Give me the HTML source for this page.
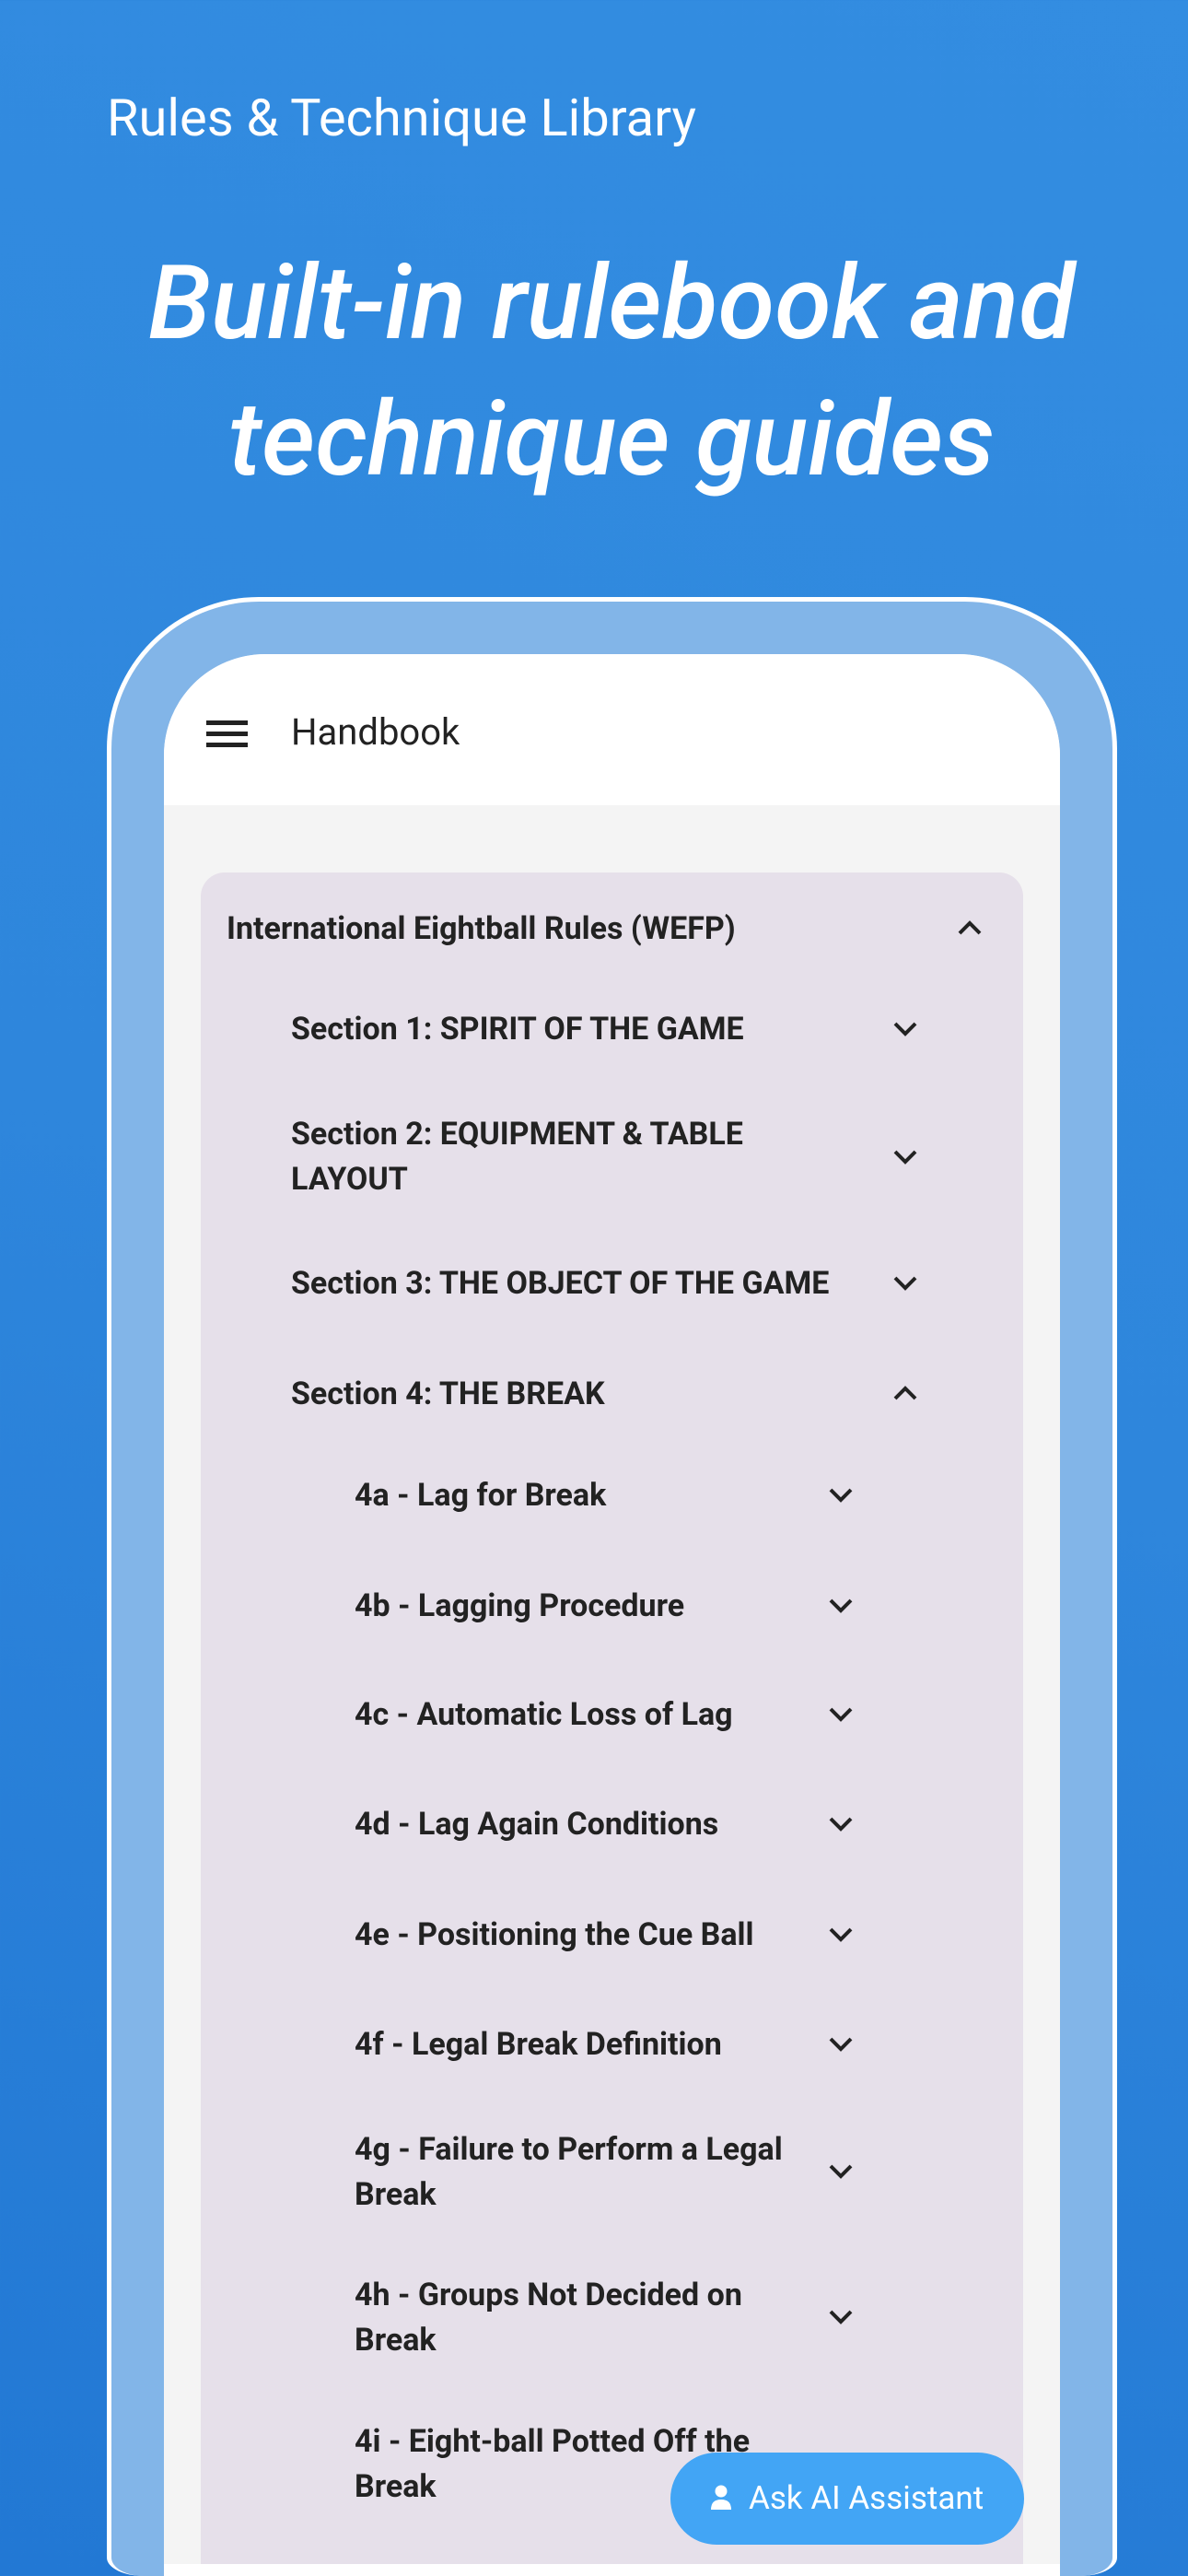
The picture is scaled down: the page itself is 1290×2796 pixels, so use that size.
<!DOCTYPE html>
<html style="width:1290px;height:2796px;overflow:hidden"><head><meta charset="utf-8"><style>
*{margin:0;padding:0;box-sizing:border-box}
body{width:1290px;height:2796px;overflow:hidden;position:relative;font-family:"Roboto","Liberation Sans",sans-serif;background:linear-gradient(200deg,#338de1 0%,#2e86dc 50%,#2278d4 100%)}
.a{position:absolute}
.t{position:absolute;color:#222;font-weight:bold;font-size:34px;line-height:49px;white-space:nowrap}
.c{position:absolute;width:30px;height:20px}
</style></head><body>
<div class="a" style="left:116px;top:96px;color:#fff;font-size:56px;line-height:64px">Rules &amp; Technique Library</div>
<div class="a" style="left:0;width:1328px;top:256px;text-align:center;color:#fff;font-style:italic;font-weight:500;font-size:112px;line-height:148px">Built-in rulebook and<br>technique guides</div>
<div class="a" style="left:116px;top:648px;width:1097px;height:2148px;border:5px solid #fff;border-bottom:none;border-radius:165px 165px 40px 40px / 165px 165px 20px 20px;background:#82b5e8"></div>
<div class="a" style="left:178px;top:710px;width:973px;height:2073px;border-radius:110px 110px 0 0;background:#f4f4f4;overflow:hidden">
 <div class="a" style="left:0;top:0;width:973px;height:164px;background:#fff"></div>
</div>
<div class="a" style="left:178px;top:2783px;width:973px;height:13px;background:#fff"></div>
<svg class="a" style="left:224px;top:780px" width="46" height="34"><g fill="#222"><rect x="0" y="2" width="45" height="5"/><rect x="0" y="14" width="45" height="5"/><rect x="0" y="26" width="45" height="5"/></g></svg>
<div class="a" style="left:316px;top:770px;font-size:40px;line-height:50px;color:#222">Handbook</div>
<div class="a" style="left:218px;top:947px;width:893px;height:1836px;background:#e6e0ea;border-radius:26px 26px 0 0"></div>

<div class="t" style="left:246px;top:984px">International Eightball Rules (WEFP)</div>
<svg class="c" style="left:1038px;top:997px"><polyline points="4,16 15,5 26,16" fill="none" stroke="#222" stroke-width="4"/></svg>

<div class="t" style="left:316px;top:1093px">Section 1: SPIRIT OF THE GAME</div>
<svg class="c" style="left:968px;top:1107px"><polyline points="4,4 15,15 26,4" fill="none" stroke="#222" stroke-width="4"/></svg>
<div class="t" style="left:316px;top:1207px">Section 2: EQUIPMENT &amp; TABLE<br>LAYOUT</div>
<svg class="c" style="left:968px;top:1246px"><polyline points="4,4 15,15 26,4" fill="none" stroke="#222" stroke-width="4"/></svg>
<div class="t" style="left:316px;top:1369px">Section 3: THE OBJECT OF THE GAME</div>
<svg class="c" style="left:968px;top:1383px"><polyline points="4,4 15,15 26,4" fill="none" stroke="#222" stroke-width="4"/></svg>
<div class="t" style="left:316px;top:1489px">Section 4: THE BREAK</div>
<svg class="c" style="left:968px;top:1502px"><polyline points="4,16 15,5 26,16" fill="none" stroke="#222" stroke-width="4"/></svg>

<div class="t" style="left:385px;top:1599px">4a - Lag for Break</div>
<svg class="c" style="left:898px;top:1613px"><polyline points="4,4 15,15 26,4" fill="none" stroke="#222" stroke-width="4"/></svg>
<div class="t" style="left:385px;top:1719px">4b - Lagging Procedure</div>
<svg class="c" style="left:898px;top:1733px"><polyline points="4,4 15,15 26,4" fill="none" stroke="#222" stroke-width="4"/></svg>
<div class="t" style="left:385px;top:1837px">4c - Automatic Loss of Lag</div>
<svg class="c" style="left:898px;top:1851px"><polyline points="4,4 15,15 26,4" fill="none" stroke="#222" stroke-width="4"/></svg>
<div class="t" style="left:385px;top:1956px">4d - Lag Again Conditions</div>
<svg class="c" style="left:898px;top:1970px"><polyline points="4,4 15,15 26,4" fill="none" stroke="#222" stroke-width="4"/></svg>
<div class="t" style="left:385px;top:2076px">4e - Positioning the Cue Ball</div>
<svg class="c" style="left:898px;top:2090px"><polyline points="4,4 15,15 26,4" fill="none" stroke="#222" stroke-width="4"/></svg>
<div class="t" style="left:385px;top:2195px">4f - Legal Break Definition</div>
<svg class="c" style="left:898px;top:2209px"><polyline points="4,4 15,15 26,4" fill="none" stroke="#222" stroke-width="4"/></svg>
<div class="t" style="left:385px;top:2309px">4g - Failure to Perform a Legal<br>Break</div>
<svg class="c" style="left:898px;top:2347px"><polyline points="4,4 15,15 26,4" fill="none" stroke="#222" stroke-width="4"/></svg>
<div class="t" style="left:385px;top:2467px">4h - Groups Not Decided on<br>Break</div>
<svg class="c" style="left:898px;top:2505px"><polyline points="4,4 15,15 26,4" fill="none" stroke="#222" stroke-width="4"/></svg>
<div class="t" style="left:385px;top:2626px">4i - Eight-ball Potted Off the<br>Break</div>

<div class="a" style="left:728px;top:2662px;width:384px;height:100px;border-radius:50px;background:#42a5f5;color:#fff;font-size:35px;line-height:100px;padding-left:85px;white-space:nowrap">Ask AI Assistant</div>
<svg class="a" style="left:771px;top:2697px" width="24" height="28"><circle cx="12" cy="7" r="6.5" fill="#fff"/><path d="M1 27 Q1 16 12 16 Q23 16 23 27 Z" fill="#fff"/></svg>
</body></html>
